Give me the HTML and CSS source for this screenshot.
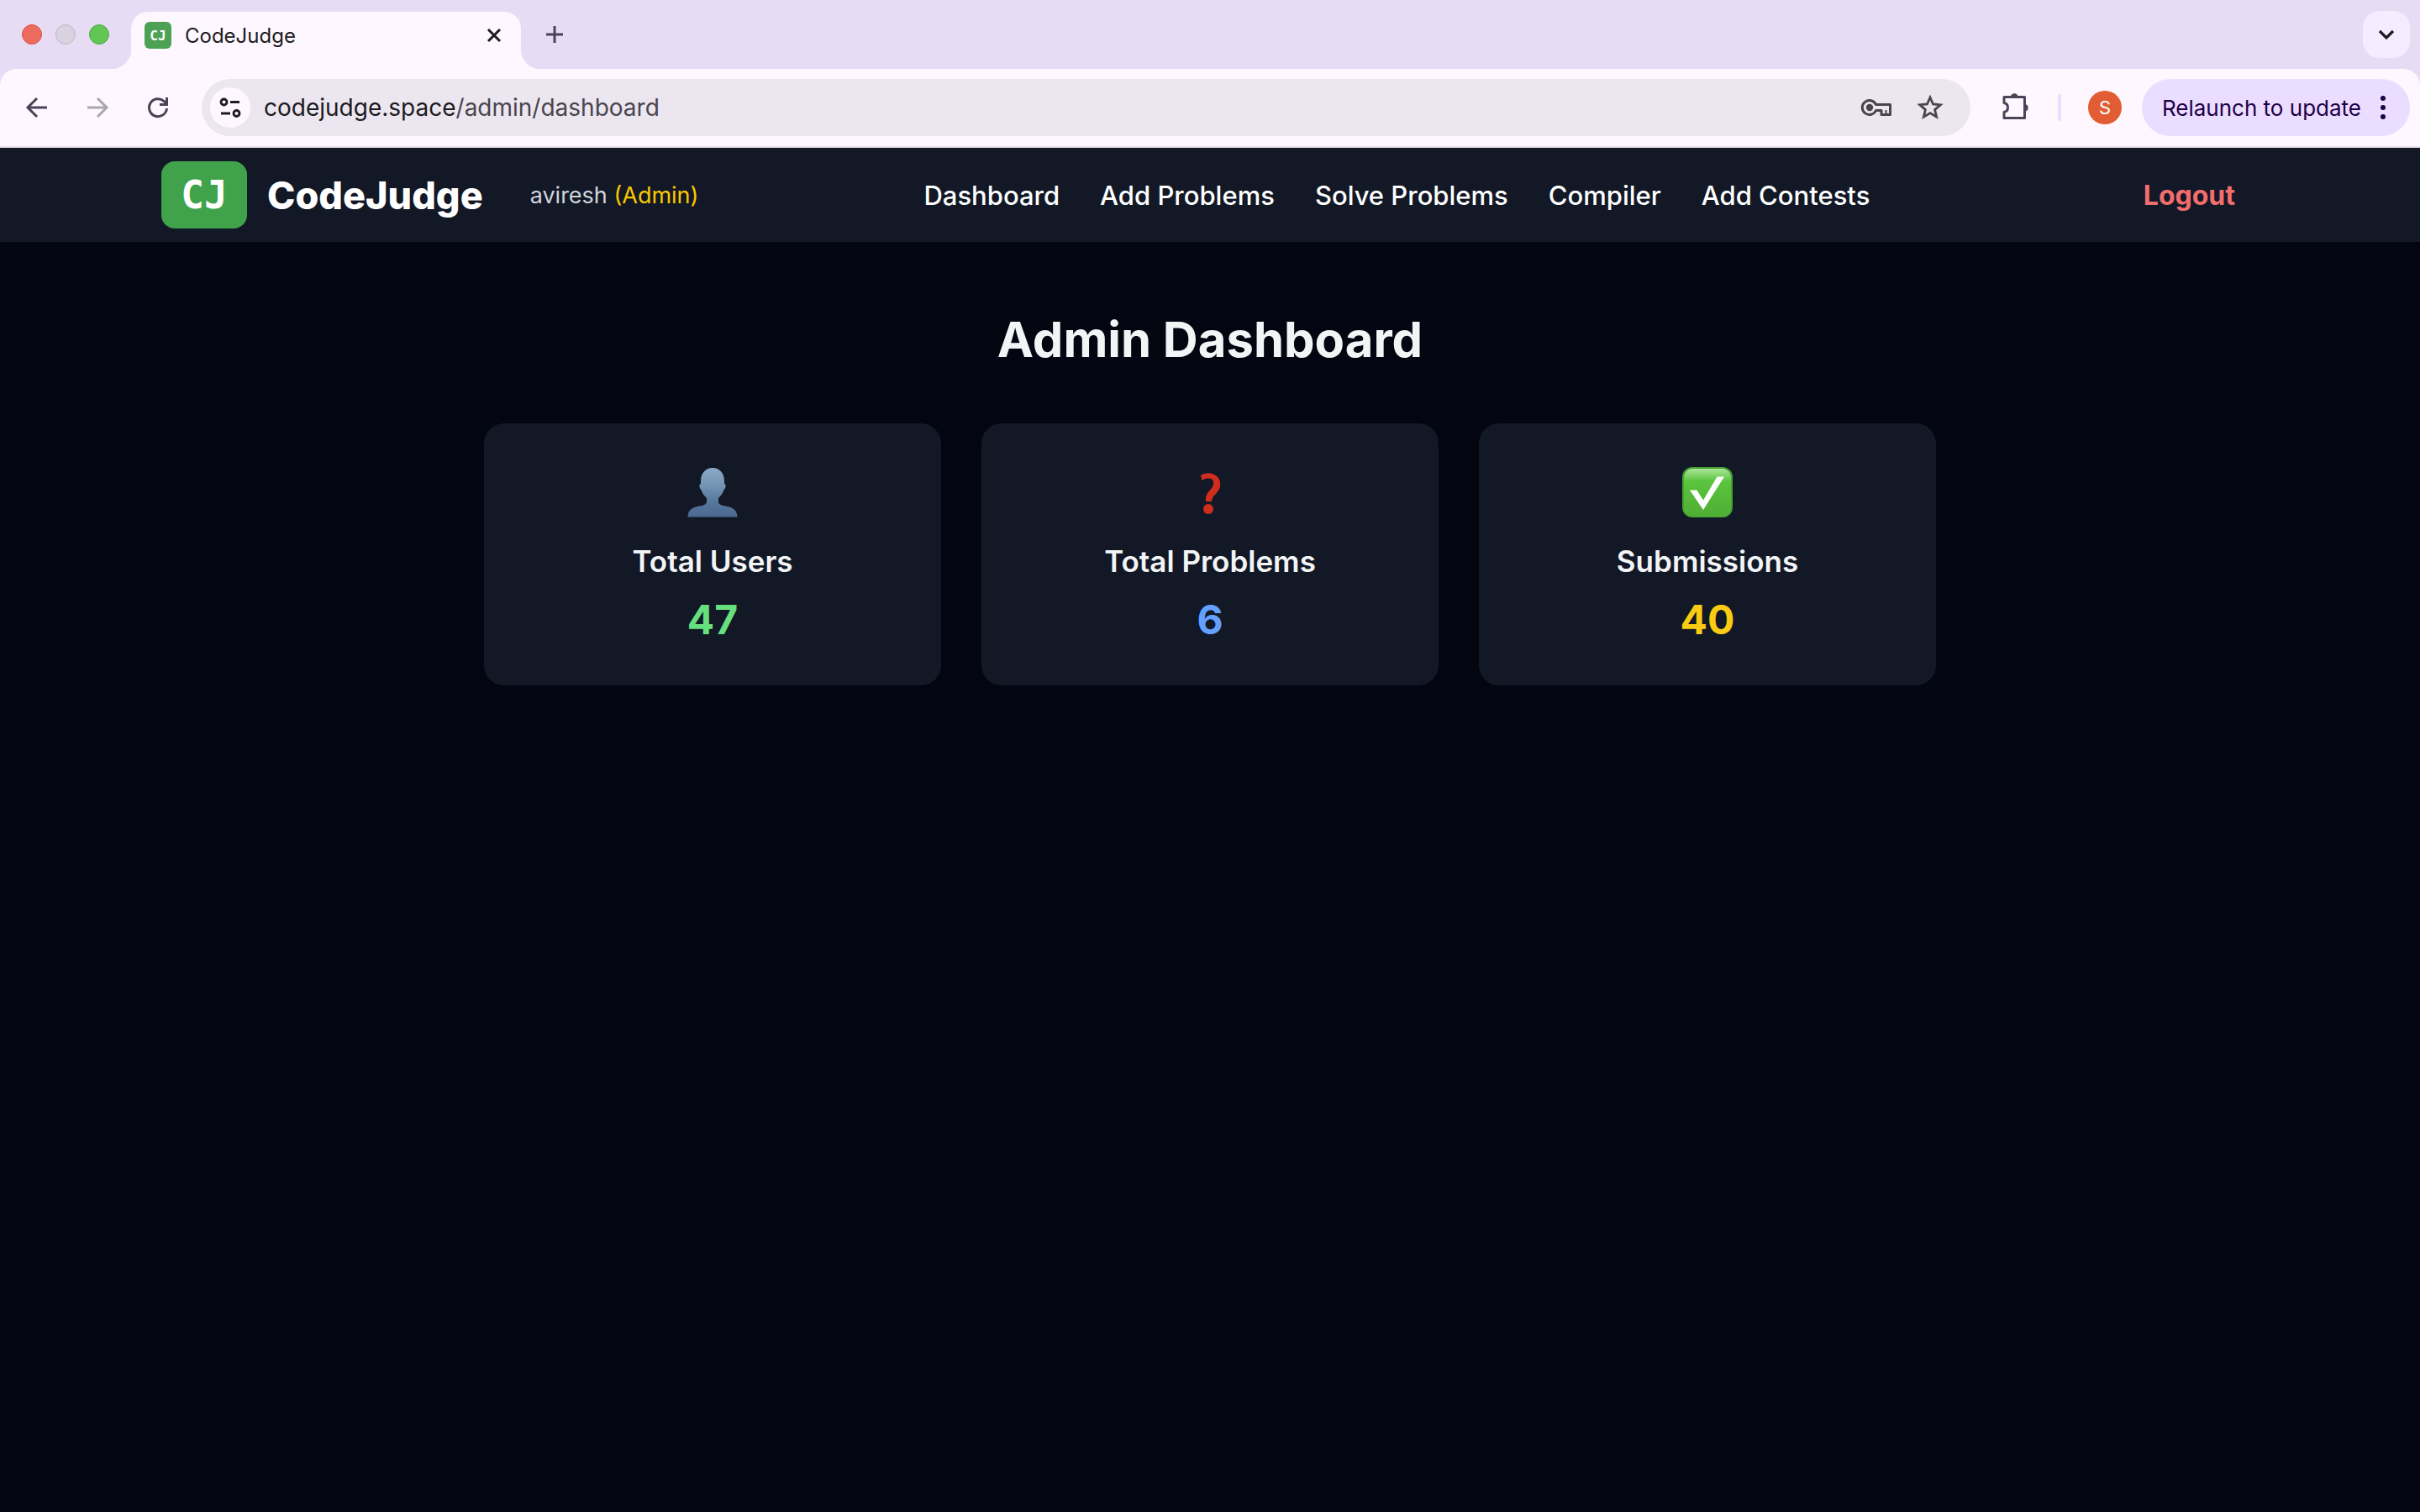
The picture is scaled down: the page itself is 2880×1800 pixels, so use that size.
FILE: index.html
```html
<!DOCTYPE html>
<html lang="en">
<head>
<meta charset="utf-8">
<title>CodeJudge</title>
<link rel="stylesheet" href="styles.css">
</head>
<body>
<div class="browser">
  <div class="tabstrip">
    <div class="lights"><span class="light red"></span><span class="light gray"></span><span class="light green"></span></div>
    <div class="tab">
      <span class="favicon">CJ</span>
      <span class="tab-title">CodeJudge</span>
      <button class="icon-btn tab-close" aria-label="Close tab"><svg width="20" height="20" viewBox="0 0 20 20"><path d="M3 3L17 17M17 3L3 17" stroke="#1d1b20" stroke-width="3" fill="none"/></svg></button>
    </div>
    <button class="icon-btn new-tab" aria-label="New tab"><svg width="24" height="24" viewBox="0 0 24 24"><path d="M12 2V22M2 12H22" stroke="#4a4458" stroke-width="3" fill="none"/></svg></button>
    <button class="icon-btn tab-search" aria-label="Search tabs"><svg width="24" height="24" viewBox="0 0 24 24"><path d="M4 8L12 16L20 8" stroke="#1d1b20" stroke-width="3.2" fill="none"/></svg></button>
  </div>
  <div class="toolbar">
    <div class="history">
      <button class="icon-btn" aria-label="Back"><svg width="32" height="32" viewBox="0 0 32 32"><path d="M28 16H6M16 5L5 16L16 27" stroke="#4a4458" stroke-width="3" fill="none"/></svg></button>
      <button class="icon-btn" aria-label="Forward"><svg width="32" height="32" viewBox="0 0 32 32"><path d="M4 16H26M16 5L27 16L16 27" stroke="#aaa6ad" stroke-width="3" fill="none"/></svg></button>
      <button class="icon-btn" aria-label="Reload"><svg width="32" height="32" viewBox="0 0 32 32"><path d="M26.500 17A10.500 10.500 0 1 1 23 8.300L26 11" stroke="#4a4458" stroke-width="3" fill="none"/><path d="M26.500 4V12.500H18" stroke="#4a4458" stroke-width="3" fill="none"/></svg></button>
    </div>
    <div class="omnibox">
      <button class="icon-btn site-info" aria-label="Site information"><svg width="28" height="28" viewBox="0 0 28 28"><g stroke="#1d1b20" stroke-width="2.800" fill="none"><circle cx="6.500" cy="7.500" r="3.500"/><path d="M14 7.500H25M3 21H14"/><circle cx="21.500" cy="21" r="3.500"/></g></svg></button>
      <p class="url"><span class="url-host">codejudge.space</span><span class="url-path">/admin/dashboard</span></p>
      <button class="icon-btn" aria-label="Passwords"><svg width="40" height="40" viewBox="0 0 40 40"><path d="M19.500 16.500A8.500 8.500 0 1 0 19.500 23.500H26V28.500H36.500V16.500Z" stroke="#49454e" stroke-width="3" fill="none" stroke-linejoin="round"/><circle cx="12" cy="20" r="4.200" fill="#49454e"/><path d="M31.500 23V28" stroke="#49454e" stroke-width="2"/></svg></button>
      <button class="icon-btn" aria-label="Bookmark this tab"><svg width="32" height="32" viewBox="0 0 32 32"><path d="M16 4L19.500 12L28.300 12.800L21.600 18.600L23.600 27.200L16 22.600L8.400 27.200L10.400 18.600L3.700 12.800L12.500 12Z" stroke="#49454e" stroke-width="2.800" fill="none"/></svg></button>
    </div>
    <button class="icon-btn extensions" aria-label="Extensions"><svg width="36" height="36" viewBox="0 0 36 36"><path d="M4 5.500H28.500V30.500H4V23.500Q8.500 22.500 8.500 18Q8.500 13.500 4 12.500Z" stroke="#4a4458" stroke-width="3" fill="none" stroke-linejoin="round"/><path d="M12 5A4.300 4.300 0 0 1 20.500 5ZM29 14A4.300 4.300 0 0 1 29 22.500Z" fill="#4a4458"/></svg></button>
    <span class="separator"></span>
    <button class="icon-btn avatar" aria-label="Profile">S</button>
    <button class="relaunch">Relaunch to update<svg width="8" height="28" viewBox="0 0 8 28"><g fill="#1f0047"><circle cx="4" cy="3" r="3"/><circle cx="4" cy="14" r="3"/><circle cx="4" cy="25" r="3"/></g></svg></button>
  </div>
</div>
<header class="site-header">
  <div class="site-bar">
    <a class="brand" href="#"><span class="brand-mark">CJ</span><span class="brand-name">CodeJudge</span></a>
    <p class="user">aviresh <span class="role">(Admin)</span></p>
    <nav class="links">
      <a href="#">Dashboard</a><a href="#">Add Problems</a><a href="#">Solve Problems</a><a href="#">Compiler</a><a href="#">Add Contests</a>
    </nav>
    <button class="logout">Logout</button>
  </div>
</header>
<main class="dashboard">
  <h1>Admin Dashboard</h1>
  <div class="cards">
    <section class="card">
      <svg class="card-icon" width="64" height="64" viewBox="0 0 64 64"><defs><linearGradient id="bust" x1="0" y1="0" x2="0" y2="1"><stop offset="0" stop-color="#8aaac6"/><stop offset=".35" stop-color="#7495b3"/><stop offset=".7" stop-color="#56769b"/><stop offset="1" stop-color="#4c688f"/></linearGradient></defs><path d="M32 3C40 3 46 9 46 18.500V22C48.500 22.500 48 27 45.500 29C44.500 33 42 36 39 39V43C39 52 61 44 61.500 61.500H2.500C3 44 25 52 25 43V39C22 36 19.500 33 18.500 29C16 27 15.500 22.500 18 22V18.500C18 9 24 3 32 3Z" fill="url(#bust)"/></svg>
      <h2>Total Users</h2>
      <p class="count green-text">47</p>
    </section>
    <section class="card">
      <svg class="card-icon" width="64" height="64" viewBox="0 0 64 64"><path d="M21 12C25 8.500 32 8.500 36 10.500C42 13 45 18 44 25C43 31 38 34 35.500 38C34 40.500 34.500 42 34 43H27C26 34 31 31 34 27C38 22 37 15.500 30 15.500C27 15.500 25.500 16 22.500 18Z" fill="#d12d1f"/><circle cx="30" cy="52" r="6" fill="#d12d1f"/></svg>
      <h2>Total Problems</h2>
      <p class="count blue-text">6</p>
    </section>
    <section class="card">
      <svg class="card-icon" width="64" height="64" viewBox="0 0 64 64"><defs><linearGradient id="tile" x1="0" y1="0" x2="0" y2="1"><stop offset="0" stop-color="#a9e69a"/><stop offset=".26" stop-color="#5bc43e"/><stop offset="1" stop-color="#4fae35"/></linearGradient></defs><rect x="2" y="2" width="60" height="60" rx="12" fill="#46a030"/><rect x="4" y="4" width="56" height="57" rx="10" fill="url(#tile)"/><path d="M11 29.500H19.500L27 41.500L43.500 13.500H52L27 53Z" fill="#fff"/></svg>
      <h2>Submissions</h2>
      <p class="count yellow-text">40</p>
    </section>
  </div>
</main>
</body>
</html>
```
FILE: styles.css
```css
* { box-sizing: border-box; margin: 0; }
body { background: #030510; font-family: Inter, "Liberation Sans", sans-serif; color: #fff; }
button { border: 0; background: none; font: inherit; color: inherit; padding: 0; cursor: pointer; }
a { color: inherit; text-decoration: none; }
svg { display: block; flex: none; }
.icon-btn { display: grid; place-items: center; flex: none; }

.browser { background: #e8dcf4; }
.tabstrip { display: flex; align-items: center; height: 82px; padding: 0 12px 0 26px; }
.lights { display: flex; gap: 16px; margin-right: 26px; }
.light { width: 24px; height: 24px; border-radius: 50%; border: 1px solid; }
.red { background: #ec6a5e; border-color: #d5544a; }
.gray { background: #d9d2df; border-color: #bfb8c4; }
.green { background: #61c654; border-color: #4fab42; }
.tab { position: relative; display: flex; align-items: center; align-self: flex-end; width: 464px; height: 68px; padding: 0 22px 12px 16px; border-radius: 20px 20px 0 0; background: #fef7ff; color: #1d1b20; font-size: 24px; }
.tab::before, .tab::after { content: ""; position: absolute; bottom: 0; width: 24px; height: 24px; }
.tab::before { right: 100%; background: radial-gradient(circle at 0 0, transparent 24px, #fef7ff 25px); }
.tab::after { left: 100%; background: radial-gradient(circle at 100% 0, transparent 24px, #fef7ff 25px); }
.favicon { display: grid; place-items: center; width: 32px; height: 32px; border-radius: 6px; background: #4ca154; color: #fff; font: bold 16px "DejaVu Sans Mono", monospace; margin-right: 16px; }
.tab-title { flex: 1; }
.new-tab { margin-left: 28px; }
.tab-search { width: 56px; height: 56px; margin-left: auto; border-radius: 20px; background: #f5edff; }
.toolbar { display: flex; align-items: center; height: 94px; padding: 0 12px 0 28px; border-bottom: 2px solid #e6e0e9; border-radius: 20px 20px 0 0; background: #fef7ff; }
.history { display: flex; gap: 40px; margin-right: 36px; }
.omnibox { display: flex; align-items: center; flex: 1; height: 68px; padding: 0 32px 0 10px; gap: 28px; border-radius: 34px; background: #ece6f0; }
.site-info { width: 48px; height: 48px; border-radius: 50%; background: #fef7ff; margin-right: -12px; }
.url { flex: 1; font-size: 28px; color: #49454e; }
.url-host { color: #1d1b20; }
.extensions { margin-left: 36px; }
.separator { width: 4px; height: 32px; margin: 0 32px; border-radius: 2px; background: #eaddff; }
.avatar { width: 40px; height: 40px; border-radius: 50%; background: #e25d33; color: #fff; font-size: 22px; margin-right: 24px; }
.relaunch { display: flex; align-items: center; gap: 22px; height: 68px; padding: 0 28px 0 24px; border-radius: 34px; background: #eaddff; color: #1f0047; font-size: 26px; white-space: nowrap; }

.site-header { background: #121826; }
.site-bar { display: flex; align-items: center; max-width: 2560px; height: 112px; margin: 0 auto; padding: 0 60px 0 32px; }
.brand { display: flex; align-items: center; gap: 24px; }
.brand-mark { display: grid; place-items: center; width: 102px; height: 80px; border-radius: 16px; background: #40a34b; font: bold 46px "DejaVu Sans Mono", monospace; }
.brand-name { font-size: 45px; font-weight: 800; }
.user { margin-left: 56px; color: #d1d5dc; font-size: 27px; }
.role { color: #fcc800; }
.links { display: flex; gap: 48px; margin: 0 auto 0 268px; font-size: 31px; font-weight: 500; }
.logout { color: #f26d6d; font-size: 32px; font-weight: 700; }

.dashboard { max-width: 1792px; margin: 0 auto; padding: 80px 32px; text-align: center; color: #f3f4f6; }
h1 { font-size: 58px; line-height: 72px; font-weight: 700; margin-bottom: 64px; }
.cards { display: grid; grid-template-columns: repeat(3, 1fr); gap: 48px; }
.card { display: flex; flex-direction: column; align-items: center; padding: 50px 48px 46px; border-radius: 24px; background: #121826; }
.card-icon { margin-bottom: 22px; }
h2 { font-size: 35px; line-height: 56px; font-weight: 600; margin-bottom: 10px; }
.count { font-size: 48px; line-height: 64px; font-weight: 700; }
.green-text { color: #68df7f; }
.blue-text { color: #64a0ff; }
.yellow-text { color: #f9cb12; }
```
